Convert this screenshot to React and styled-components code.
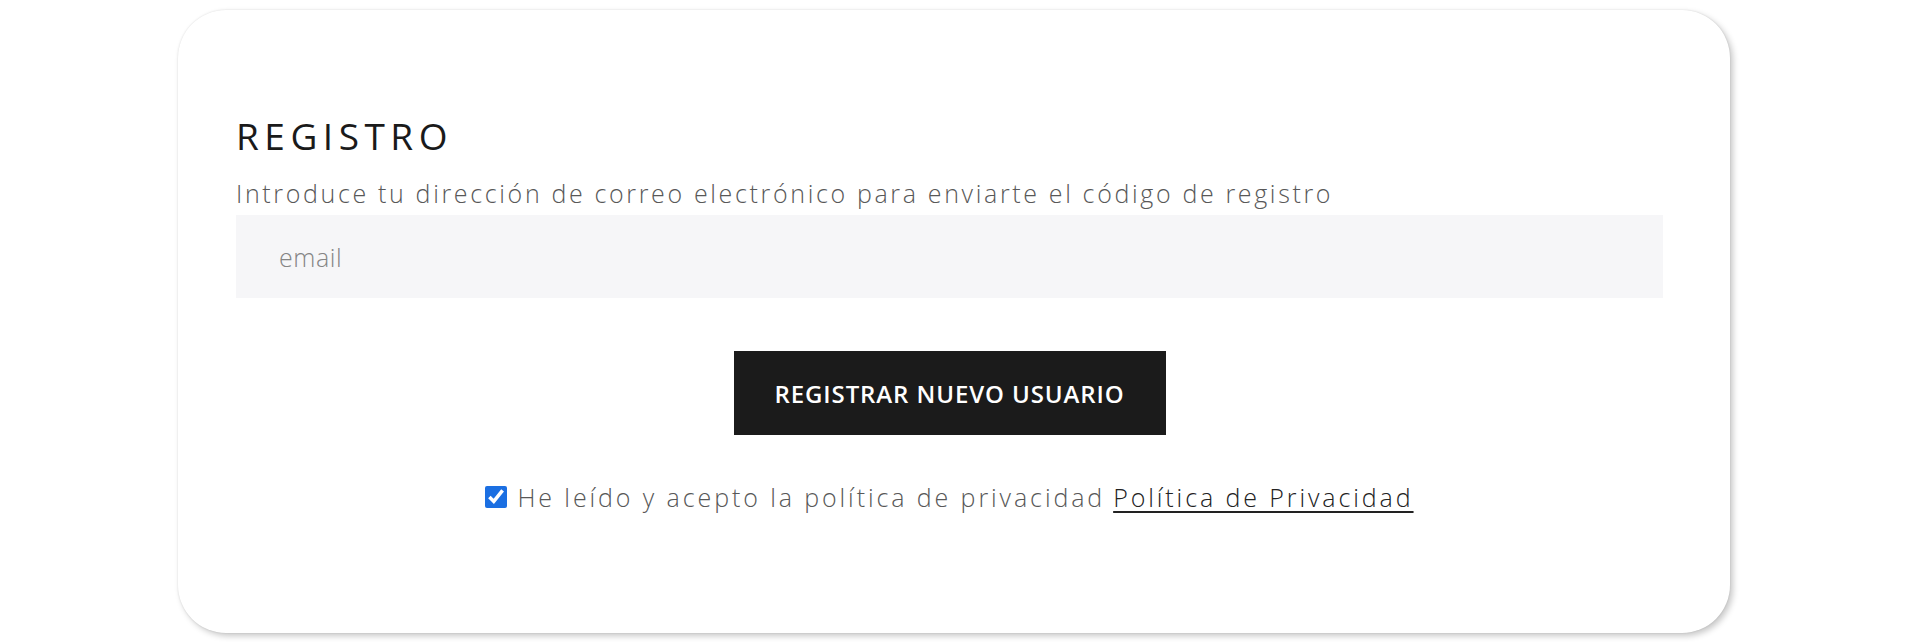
import React from "react"
import styled, { createGlobalStyle } from "styled-components"

const GlobalStyle = createGlobalStyle`
  html, body {
    margin: 0;
    padding: 0;
    background: #ffffff;
  }
  body {
    font-family: "Open Sans", "Liberation Sans", sans-serif;
  }
`

const Page = styled.main`
  width: 1927px;
  height: 642px;
  overflow: hidden;
  padding-top: 10px;
  box-sizing: border-box;
`

const Card = styled.section`
  margin-left: 178px;
  width: 1552px;
  height: 623px;
  box-sizing: border-box;
  padding: 104px 67px 0 58px;
  background: #ffffff;
  border-radius: 48px;
  box-shadow: 3px 3px 6px rgba(0, 0, 0, 0.22), 0 0 2px rgba(0, 0, 0, 0.12);
  display: flex;
  flex-direction: column;
`

const Title = styled.h2`
  margin: 0;
  font-size: 37px;
  line-height: 44px;
  font-weight: 400;
  letter-spacing: 5.5px;
  color: #1a1a1a;
`

const Subtitle = styled.p`
  margin: 18px 0 5px;
  font-size: 25px;
  line-height: 34px;
  font-weight: 300;
  letter-spacing: 2.65px;
  color: #585858;
`

const EmailInput = styled.input`
  display: block;
  width: 100%;
  height: 83px;
  box-sizing: border-box;
  border: none;
  outline: none;
  background: #f6f6f8;
  padding: 0 43px;
  font-family: inherit;
  font-size: 25px;
  font-weight: 300;
  letter-spacing: 0.6px;
  color: #333;

  &::placeholder {
    color: #858585;
  }
`

const Actions = styled.div`
  display: flex;
  flex-direction: column;
  align-items: center;
  margin-top: 53px;
`

const Button = styled.button`
  width: 432px;
  height: 84px;
  border: none;
  background: #1b1b1b;
  color: #ffffff;
  font-family: inherit;
  font-size: 24px;
  font-weight: 600;
  letter-spacing: 0.9px;
  cursor: pointer;
`

const Consent = styled.label`
  margin-top: 45px;
  display: flex;
  align-items: center;
  font-size: 25px;
  line-height: 34px;
  font-weight: 300;
  letter-spacing: 2.9px;
  color: #585858;

  input {
    width: 22px;
    height: 22px;
    margin: 0 10px 0 0;
    accent-color: #1b6fe2;
  }

  a {
    margin-left: 8px;
    color: #222;
    text-decoration: underline;
    text-underline-offset: 4px;
  }
`

const App = () => {
  return (
    <Page>
      <GlobalStyle />
      <Card>
        <Title>REGISTRO</Title>
        <Subtitle>
          Introduce tu dirección de correo electrónico para enviarte el código
          de registro
        </Subtitle>
        <EmailInput type="email" placeholder="email" />
        <Actions>
          <Button type="button">REGISTRAR NUEVO USUARIO</Button>
          <Consent>
            <input type="checkbox" defaultChecked />
            He leído y acepto la política de privacidad
            <a href="#privacidad">Política de Privacidad</a>
          </Consent>
        </Actions>
      </Card>
    </Page>
  )
}

export default App
